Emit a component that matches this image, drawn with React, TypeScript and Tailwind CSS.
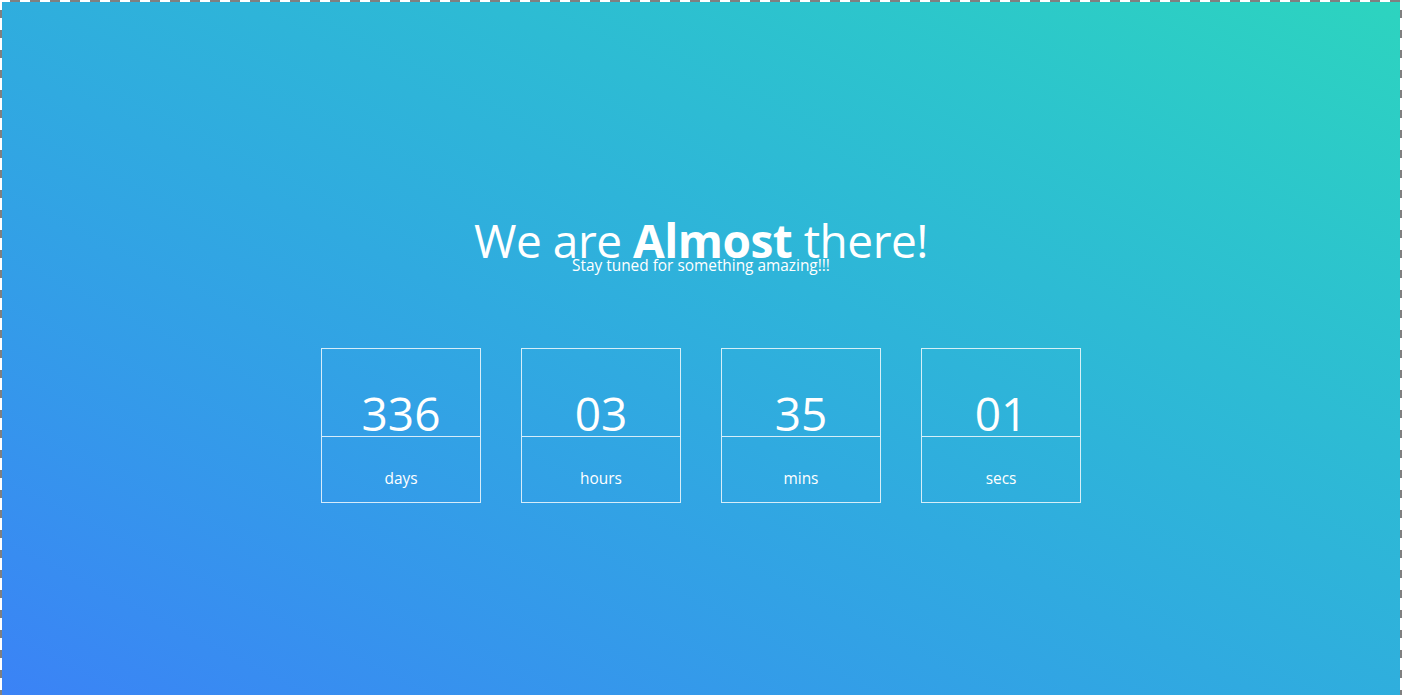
import React from "react";

const units = [
  { value: "336", label: "days" },
  { value: "03", label: "hours" },
  { value: "35", label: "mins" },
  { value: "01", label: "secs" },
];

// dashed frame: 10px dashes / 10px gaps, 2px thick
const frame =
  "bg-white p-[2px] [background-image:repeating-linear-gradient(90deg,transparent_0_10px,#808080_10px_20px),repeating-linear-gradient(180deg,transparent_0_10px,#808080_10px_18px,transparent_18px_20px),repeating-linear-gradient(180deg,transparent_0_10px,#808080_10px_18px,transparent_18px_20px)] [background-size:100%_2px,2px_100%,2px_100%] [background-position:0_0,0_0,100%_0] [background-repeat:no-repeat]";

const App = () => {
  return (
    <div
      className="w-full h-[100dvh] overflow-hidden bg-white"
      style={{ fontFamily: '"Open Sans", "Noto Sans", sans-serif' }}
    >
      <div className={`h-[702px] ${frame}`}>
        <div className="h-full bg-gradient-to-tr from-[#3b82f6] to-[#2dd4bf] text-white">
          <div className="flex flex-col items-center pt-[212px]">
            <h1 className="text-[46px] leading-[52px] font-normal tracking-[-0.5px]">
              We are <span className="font-bold">Almost</span> there!
            </h1>
            <p className="text-[15.4px] leading-[20px] -mt-[10px]">
              Stay tuned for something amazing!!!
            </p>
          </div>

          <div className="flex justify-center gap-[40px] mt-[72px]">
            {units.map((u) => (
              <div
                key={u.label}
                className="w-[160px] h-[155px] border border-white/80 flex flex-col"
              >
                <div className="h-[88px] border-b border-white/80 flex items-end justify-center">
                  <span className="text-[46px] leading-none">{u.value}</span>
                </div>
                <div className="flex-1 flex items-center justify-center pt-[18px]">
                  <span className="text-[15.4px]">{u.label}</span>
                </div>
              </div>
            ))}
          </div>
        </div>
      </div>
    </div>
  );
};

export default App;
